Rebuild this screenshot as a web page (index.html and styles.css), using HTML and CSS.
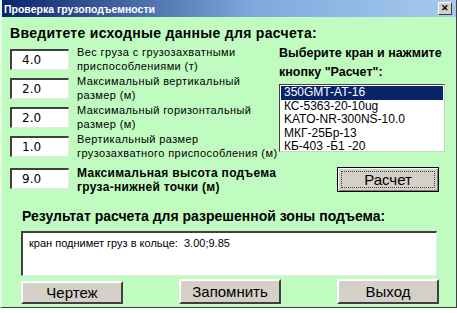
FILE: index.html
```html
<!DOCTYPE html>
<html lang="ru">
<head>
    <meta charset="UTF-8">
    <title>Проверка грузоподъемности</title>
    <link rel="stylesheet" href="styles.css">
</head>
<body>
    <div class="window">
        <div class="titlebar">
            <span class="title">Проверка грузоподъемности</span>
            <span class="close-btn">&#10005;</span>
        </div>

        <div class="content">
            <h1 class="heading">Введитете исходные данные для расчета:</h1>

            <div class="main">
                <div class="params">
                    <div class="row">
                        <div class="field">4.0</div>
                        <div class="label">Вес груза с грузозахватными<br>приспособлениями (т)</div>
                    </div>
                    <div class="row">
                        <div class="field">2.0</div>
                        <div class="label">Максимальный вертикальный<br>размер (м)</div>
                    </div>
                    <div class="row">
                        <div class="field">2.0</div>
                        <div class="label">Максимальный горизонтальный<br>размер (м)</div>
                    </div>
                    <div class="row">
                        <div class="field">1.0</div>
                        <div class="label">Вертикальный размер<br>грузозахватного приспособления (м)</div>
                    </div>
                    <div class="row row-last">
                        <div class="field">9.0</div>
                        <div class="label label-bold">Максимальная высота подъема<br>груза-нижней точки (м)</div>
                    </div>
                </div>

                <div class="cranes">
                    <div class="cranes-title">Выберите кран и нажмите<br>кнопку "Расчет":</div>
                    <ul class="crane-list">
                        <li class="selected">350GMT-AT-16</li>
                        <li>КС-5363-20-10ug</li>
                        <li>KATO-NR-300NS-10.0</li>
                        <li>МКГ-25Бр-13</li>
                        <li>КБ-403 -Б1 -20</li>
                    </ul>
                    <div class="calc-wrap">
                        <button class="btn btn-default"><span>Расчет</span></button>
                    </div>
                </div>
            </div>

            <div class="result-title">Результат расчета для разрешенной зоны подъема:</div>
            <div class="result-box">кран поднимет груз в кольце:&nbsp;&nbsp;3.00;9.85</div>

            <div class="actions">
                <button class="btn btn-low">Чертеж</button>
                <button class="btn">Запомнить</button>
                <button class="btn">Выход</button>
            </div>
        </div>
    </div>
</body>
</html>
```

FILE: styles.css
```css
body {
    margin: 0;
    background: #ffffff;
    font-family: "Liberation Sans", Arial, sans-serif;
}
.window {
    width: 454px;
    height: 307px;
    overflow: hidden;
    background: #c0fcc0;
    border-left: 2px solid #e4fae4;
    border-right: 1px solid #404040;
    border-bottom: 1px solid #404040;
    display: flex;
    flex-direction: column;
}
.titlebar {
    height: 17px;
    flex-shrink: 0;
    background: linear-gradient(to right, #0a246a, #7fa8dc 55%, #a6caf0);
    display: flex;
    align-items: center;
    justify-content: space-between;
    padding: 0 4px 0 2px;
}
.title {
    color: #ffffff;
    font-size: 10.5px;
    font-weight: bold;
}
.close-btn {
    width: 12px;
    height: 11px;
    background: #d4d0c8;
    border: 1px solid;
    border-color: #ffffff #404040 #404040 #ffffff;
    font-size: 9px;
    font-weight: bold;
    line-height: 11px;
    text-align: center;
    color: #000000;
}
.content {
    flex: 1;
    padding: 8px 0 0 8px;
    display: flex;
    flex-direction: column;
}
.heading {
    margin: 0;
    font-size: 14px;
    line-height: 16px;
    font-weight: bold;
    letter-spacing: 0.3px;
    color: #000000;
}
.main {
    display: flex;
    margin-top: 8px;
}
.params {
    width: 269px;
}
.row {
    display: flex;
    align-items: flex-start;
    height: 29px;
}
.row-last {
    margin-top: 3px;
}
.field {
    width: 46px;
    height: 18px;
    flex-shrink: 0;
    background: #ffffff;
    border-top: 2px solid #404040;
    border-left: 2px solid #404040;
    border-right: 1px solid #e8e8e8;
    border-bottom: 1px solid #e8e8e8;
    padding-left: 10px;
    font-family: "DejaVu Sans", sans-serif;
    font-size: 12px;
    line-height: 19px;
    margin-right: 8px;
}
.label {
    font-size: 11px;
    line-height: 14px;
    letter-spacing: 0.4px;
    margin-top: -4px;
    white-space: nowrap;
}
.label-bold {
    font-weight: bold;
    font-size: 12px;
    letter-spacing: 0.3px;
    margin-top: -2px;
}
.cranes {
    display: flex;
    flex-direction: column;
}
.cranes-title {
    font-size: 12.5px;
    line-height: 19px;
    font-weight: bold;
    margin-top: -5px;
}
.crane-list {
    list-style: none;
    margin: 0;
    padding: 1px;
    margin-top: 2px;
    width: 162px;
    height: 64px;
    background: #ffffff;
    border: 1px solid;
    border-color: #404040 #d4d0c8 #d4d0c8 #404040;
}
.crane-list li {
    font-size: 12px;
    line-height: 13.5px;
    padding-left: 3px;
}
.crane-list li.selected {
    background: #0a246a;
    color: #ffffff;
}
.calc-wrap {
    margin-top: 15px;
    padding-left: 58px;
}
.btn {
    width: 102px;
    height: 25px;
    background: #d4d0c8;
    border: 2px solid;
    border-color: #ffffff #404040 #404040 #ffffff;
    font-family: "Liberation Sans", Arial, sans-serif;
    font-size: 15px;
    color: #000000;
    padding: 0;
}
.btn-default {
    border: 1px solid #000000;
    box-shadow: inset 1px 1px 0 #ffffff, inset -1px -1px 0 #808080;
    padding: 3px;
}
.btn-default span {
    display: block;
    border: 1px dotted #404040;
    height: 15px;
    line-height: 15px;
}
.result-title {
    margin-top: 11px;
    margin-left: 12px;
    font-size: 14px;
    line-height: 16px;
    font-weight: bold;
}
.result-box {
    margin: 7px 0 0 11px;
    width: 407px;
    height: 38px;
    flex-shrink: 0;
    background: #ffffff;
    border-top: 2px solid #404040;
    border-left: 2px solid #404040;
    border-right: 1px solid #e8e8e8;
    border-bottom: 1px solid #e8e8e8;
    padding: 4px 0 0 6px;
    font-size: 11px;
}
.actions {
    display: flex;
    justify-content: space-between;
    align-items: flex-start;
    width: 418px;
    margin: 3px 0 0 11px;
}
.btn-low {
    margin-top: 2px;
    height: 23px;
}
```
